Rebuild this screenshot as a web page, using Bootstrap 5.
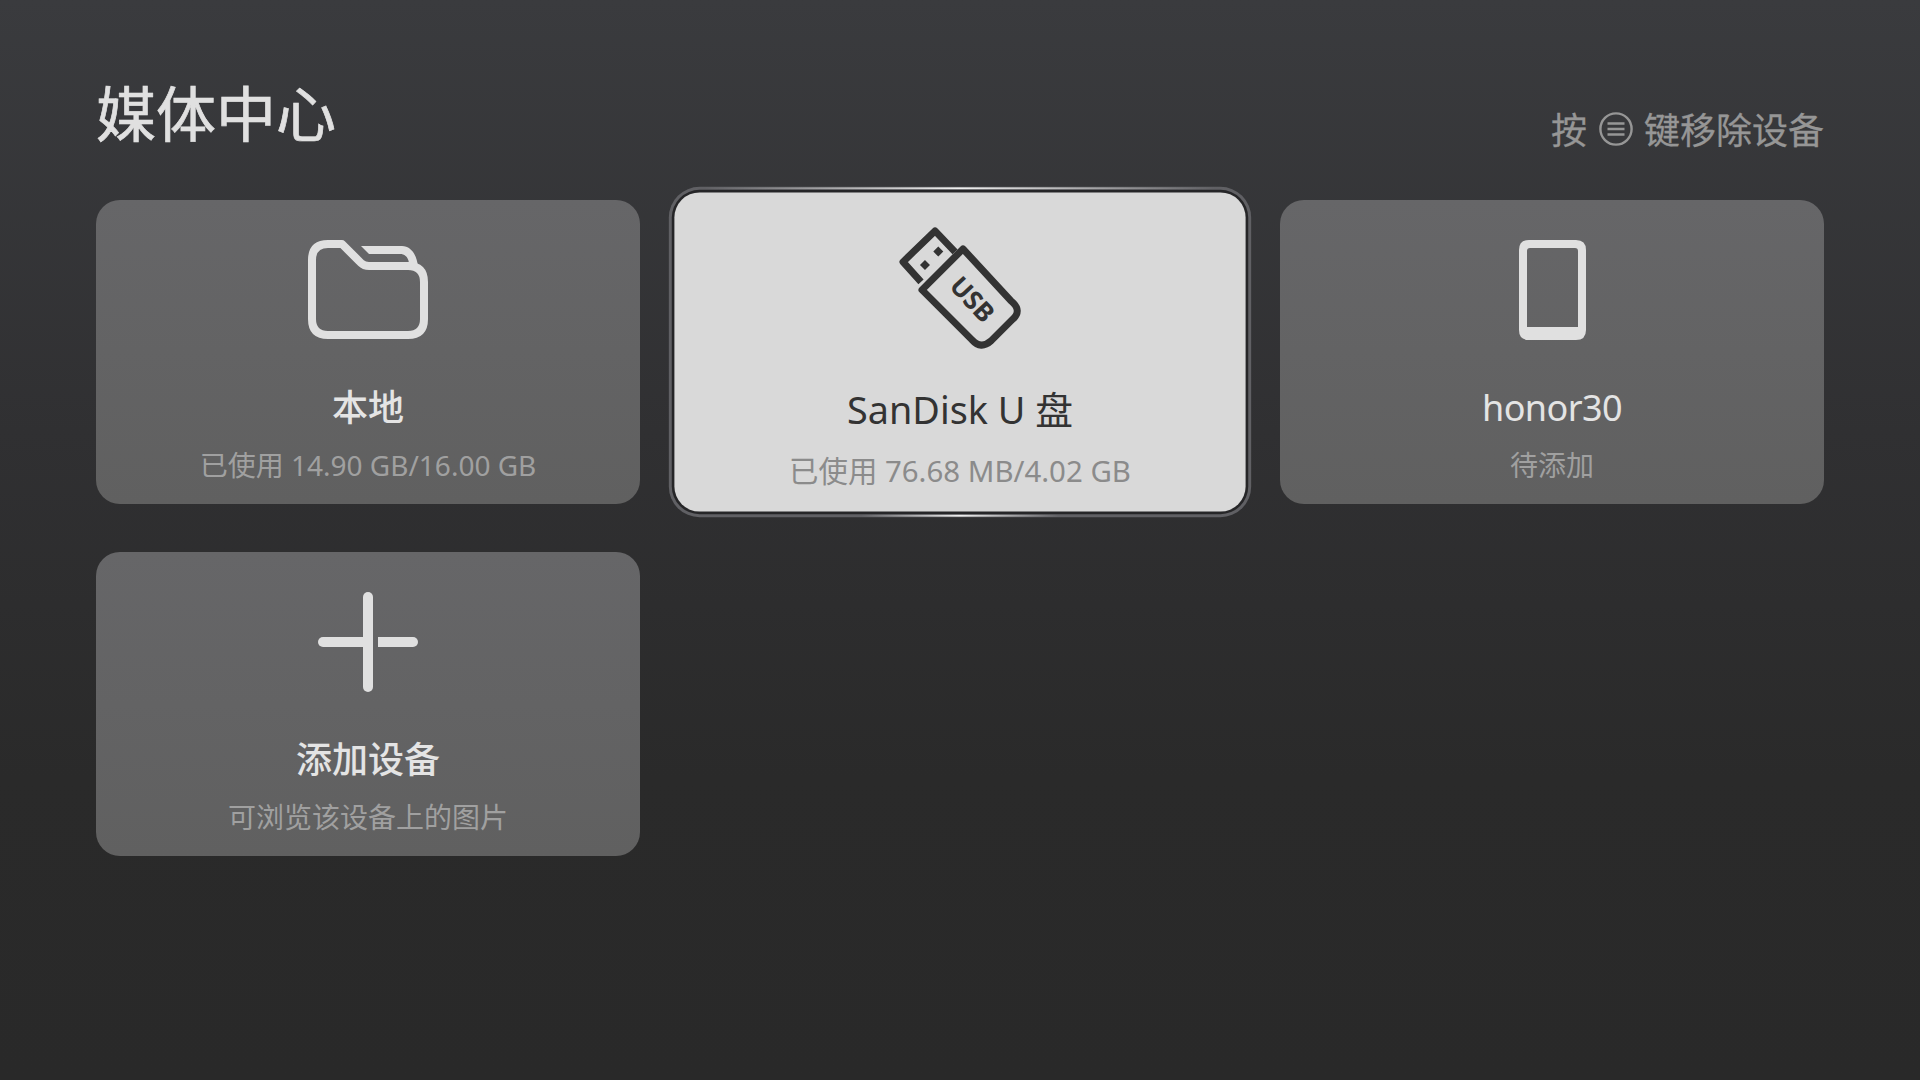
<!DOCTYPE html>
<html lang="zh-CN">
<head>
<meta charset="utf-8">
<title>媒体中心</title>
<link href="https://cdn.jsdelivr.net/npm/bootstrap@5.3.0/dist/css/bootstrap.min.css" rel="stylesheet">
<style>
html,body{height:100%;}
body{margin:0;background:linear-gradient(180deg,#3a3b3e 0%,#303032 40%,#2a2a2a 72%,#292929 100%);font-family:"Noto Sans","Noto Sans CJK SC",sans-serif;overflow:hidden;min-height:1080px;}
.stage{padding:71px 96px 0;}
.head-row{height:129px;}
.page-title{font-size:60px;line-height:80px;font-weight:400;color:#e0e0e0;margin:0;font-family:"Noto Sans CJK SC",sans-serif;-webkit-text-stroke:.7px #e0e0e0;}
.hint{height:40px;margin-top:37px;font-size:36px;line-height:40px;color:#969696;gap:13px;font-family:"Noto Sans CJK SC",sans-serif;-webkit-text-stroke:.3px #969696;}
.hint svg{display:block;margin:2px -2px 0 -1px;color:#969696;}
.dev-grid{display:grid;grid-template-columns:repeat(3,544px);grid-auto-rows:304px;gap:48px;}
.dev-card{position:relative;border-radius:24px;background:linear-gradient(180deg,#666668 0%,#606060 100%);padding-top:30px;text-align:center;}
.dev-icon{display:block;width:120px;height:120px;margin:0 auto;color:#e0e0e0;}
.dev-name{font-size:36px;line-height:48px;font-weight:500;color:#e4e4e4;margin-top:34px;}
.dev-name.latin{font-weight:400;letter-spacing:-.6px;}
.dev-sub{font-size:28px;line-height:36px;color:#a0a0a0;margin-top:15px;}
.dev-card.is-focus{background:#d9d9d9;transform:scale(1.05);z-index:2;box-shadow:0 0 0 2.5px #262628,0 0 0 5.3px #606064;}
.is-focus .dev-icon{color:#333;}
.is-focus .dev-name{color:#333;font-weight:400;}
.is-focus .dev-sub{color:#8b8b8b;}
.is-focus::after{content:"";position:absolute;inset:-5.3px;pointer-events:none;border-radius:29px;background:
 linear-gradient(90deg,transparent 6%,#f0f0f0 50%,transparent 94%) top/100% 2px no-repeat,
 linear-gradient(90deg,transparent 33%,#f0f0f0 50%,transparent 67%) bottom/100% 2px no-repeat;}
</style>
</head>
<body>
<div class="stage">
  <div class="head-row d-flex justify-content-between align-items-start">
    <h1 class="page-title">媒体中心</h1>
    <div class="hint d-flex align-items-center">
      <span>按</span>
      <svg width="34" height="34" viewBox="0 0 34 34" fill="none" stroke="currentColor" stroke-width="2.4"><circle cx="17" cy="17" r="15.6"/><path d="M8.5 11.5h17M8.5 17h17M8.5 22.5h17"/></svg>
      <span>键移除设备</span>
    </div>
  </div>
  <div class="dev-grid">
    <div class="dev-card">
      <svg class="dev-icon" viewBox="308 230 120 120" fill="none" stroke="currentColor" stroke-width="8" stroke-linejoin="round">
        <path d="M342 244 L361 263 Q364 266 369 266 H408 Q424 266 424 282 V319 Q424 335 408 335 H328 Q312 335 312 319 V260 Q312 244 328 244 Z"/>
        <path stroke="none" fill="currentColor" d="M361 246 H402 C411 246 417 255 418 267 L409 263 C408 256 404 254 400 254 H369 Z"/>
      </svg>
      <div class="dev-name">本地</div>
      <div class="dev-sub">已使用 14.90 GB/16.00 GB</div>
    </div>
    <div class="dev-card is-focus">
      <svg class="dev-icon" viewBox="897 224 126 126" fill="none" stroke="currentColor" stroke-width="7" stroke-linejoin="round">
        <path d="M922 290 L963 249 L1011 301 Q1023 311 1012 320 L991 341 Q981 350 972 340 Z"/>
        <path d="M921 282 L903 262 L935 231 L955 252"/>
        <path stroke="none" fill="currentColor" d="M938.3 246.7 L943.3 251.7 L938.3 256.7 L933.3 251.7 Z M925 260 L930 265 L925 270 L920 265 Z"/>
        <text x="973" y="299" transform="rotate(47 973 299)" text-anchor="middle" dominant-baseline="central" font-family="Noto Sans, sans-serif" font-weight="700" font-size="26" fill="currentColor" stroke="none">USB</text>
      </svg>
      <div class="dev-name">SanDisk U 盘</div>
      <div class="dev-sub">已使用 76.68 MB/4.02 GB</div>
    </div>
    <div class="dev-card">
      <svg class="dev-icon" viewBox="1492 230 120 120">
        <path fill="currentColor" fill-rule="evenodd" d="M1529 240 H1576 Q1586 240 1586 250 V330 Q1586 340 1576 340 H1529 Q1519 340 1519 330 V250 Q1519 240 1529 240 Z M1530 248 Q1527 248 1527 251 V327 H1578 V251 Q1578 248 1575 248 Z"/>
      </svg>
      <div class="dev-name latin">honor30</div>
      <div class="dev-sub">待添加</div>
    </div>
    <div class="dev-card">
      <svg class="dev-icon" viewBox="308 582 120 120" fill="currentColor">
        <rect x="363" y="592" width="10" height="100" rx="5"/>
        <path d="M323 637 H363 V647 H323 A5 5 0 0 1 323 637 Z"/>
        <path d="M378 637 H413 A5 5 0 0 1 413 647 H378 Z"/>
      </svg>
      <div class="dev-name">添加设备</div>
      <div class="dev-sub">可浏览该设备上的图片</div>
    </div>
  </div>
</div>
<script src="https://cdn.jsdelivr.net/npm/bootstrap@5.3.0/dist/js/bootstrap.bundle.min.js"></script>
</body>
</html>
